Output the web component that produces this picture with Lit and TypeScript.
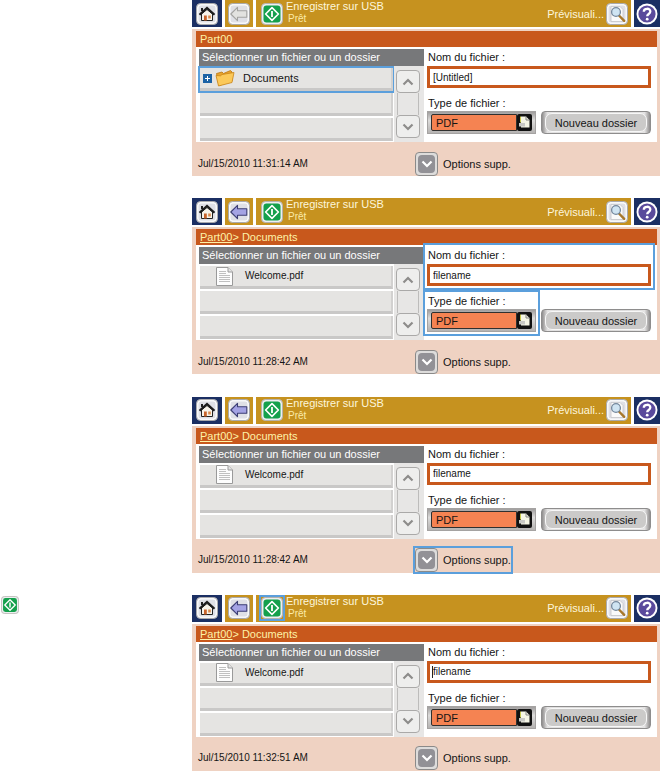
import { LitElement, html, css, svg, nothing } from "lit";
import { customElement, property } from "lit/decorators.js";
import { classMap } from "lit/directives/class-map.js";

type Mark = "" | "folder" | "fields" | "options" | "start";

const startIcon = html`<svg class="glyph" viewBox="0 0 22 22" aria-hidden="true">
  <rect x="0.5" y="0.5" width="21" height="21" rx="4" fill="#eceef0" stroke="#b4b2ae" />
  <rect x="2.5" y="2.5" width="17" height="17" rx="3" fill="#14a04c" />
  <path d="M11 4.6 L17.4 11 L11 17.4 L4.6 11 Z" fill="none" stroke="#fff" stroke-width="1.6" stroke-linejoin="round" />
  <path d="M11 8 V14" stroke="#fff" stroke-width="1.8" />
</svg>`;

const keyFace = svg`
  <rect x="0.5" y="0.5" width="21" height="21" rx="4" fill="#f4f5f7" stroke="#a9a9ac" />
  <rect x="2" y="2" width="18" height="18" rx="3" fill="#dfe0e6" stroke="#fbfbfb" />`;

const homeIcon = html`<svg class="glyph" viewBox="0 0 22 22" aria-hidden="true">
  ${keyFace}
  <path d="M5.5 11 V17.5 H16.5 V11 L11 6.5 Z" fill="#f7f3ea" stroke="#222" stroke-width="1" />
  <path d="M6 5 V8" stroke="#222" stroke-width="2" />
  <path d="M3.5 11.8 L11 5 L18.5 11.8" fill="none" stroke="#1c1c1c" stroke-width="2.2" />
  <path d="M8 17.5 V12.5 H10.8 V17.5 Z" fill="#c8642c" />
  <rect x="12.2" y="12.5" width="2.6" height="3" fill="#d98a4c" />
</svg>`;

const backIcon = (active: boolean) => html`<svg class="glyph" viewBox="0 0 22 22" aria-hidden="true">
  ${keyFace}
  <path
    d="M2.8 11 L9.5 4.3 V7.8 H18.8 V14.2 H9.5 V17.7 Z"
    fill=${active ? "#a4a3e4" : "#e2e2e0"}
    stroke=${active ? "#3c3e74" : "#a3a3a1"}
    stroke-width="1.1"
    stroke-linejoin="round"
  />
</svg>`;

const previewIcon = html`<svg class="glyph" viewBox="0 0 22 22" aria-hidden="true">
  ${keyFace}
  <path d="M5 3.5 H14 L17 6.5 V18.5 H5 Z" fill="#fafafa" stroke="#c4c4c8" stroke-width="0.8" />
  <path d="M13 12.5 L18.2 17.8" stroke="#a8782c" stroke-width="2.4" stroke-linecap="round" />
  <circle cx="10" cy="9" r="4.4" fill="#cfe4f2" stroke="#74879c" stroke-width="1.3" />
</svg>`;

const helpIcon = html`<svg class="glyph" viewBox="0 0 22 22" aria-hidden="true">
  <circle cx="11" cy="11" r="10.5" fill="#fff" />
  <circle cx="11" cy="11" r="8.6" fill="#5a4a9c" />
  <path d="M7.8 8.8 C7.8 4.8 14.3 4.8 14.3 8.6 C14.3 11 11.2 11 11.2 13.2" fill="none" stroke="#fff" stroke-width="2.3" />
  <circle cx="11.2" cy="16.2" r="1.4" fill="#fff" />
</svg>`;

const folderIcon = html`<svg class="folder" viewBox="0 0 20 18" aria-hidden="true">
  <path d="M1.5 4.5 L7 3 L8.5 4.5 L15.5 1.5 L17 3 V12 L4 16.5 Z" fill="#e8a42c" stroke="#b97410" stroke-width="0.8" />
  <path d="M3.5 17 L1 6.5 L5.5 6.8 L7 5.5 L19 3.5 L17 13.5 Z" fill="#fbc95a" stroke="#c98417" stroke-width="0.8" />
</svg>`;

const pageIcon = html`<svg class="page" viewBox="0 0 17 19" aria-hidden="true">
  <path d="M0.5 0.5 H12 L16.5 5 V18.5 H0.5 Z" fill="#fdfdfd" stroke="#9a9a9a" />
  <path d="M12 0.5 V5 H16.5" fill="#e4e4e4" stroke="#9a9a9a" />
  <path d="M3 4.5 H10 M3 6.5 H10 M3 8.5 H14 M3 10.5 H14 M3 12.5 H14 M3 14.5 H14" stroke="#b9b9b9" stroke-width="0.9" />
</svg>`;

const chevron = (up: boolean) => html`<svg class="chevron" viewBox="0 0 12 12" aria-hidden="true">
  <path d=${up ? "M1.5 8.5 L6 4 L10.5 8.5" : "M1.5 3.5 L6 8 L10.5 3.5"} fill="none" stroke="currentColor" stroke-width="2.2" />
</svg>`;

@customElement("usb-panel")
export class UsbPanel extends LitElement {
  @property() folder = "";
  @property() filename = "";
  @property() time = "";
  @property() mark: Mark = "";
  @property({ type: Boolean }) caret = false;

  static styles = css`
    :host {
      display: block;
      font: 11px/16px "Liberation Sans", Arial, sans-serif;
      color: #151515;
    }
    * {
      box-sizing: border-box;
    }
    button,
    input,
    select {
      font: inherit;
      color: inherit;
      margin: 0;
      padding: 0;
      border: 0;
      background: none;
    }
    svg {
      display: block;
      flex: none;
    }
    .glyph {
      width: 22px;
      height: 22px;
    }
    .mark {
      outline: 2px solid #5b9fdc;
    }
    .head {
      display: flex;
      gap: 3px;
      height: 27px;
    }
    .tile {
      display: flex;
      align-items: center;
      justify-content: center;
      width: 28px;
      background: #c6921f;
    }
    .tile.navy {
      width: 30px;
      background: #1b2f63;
    }
    .tile.help {
      width: 26px;
    }
    .bar {
      flex: 1;
      display: flex;
      align-items: center;
      gap: 3px;
      min-width: 0;
      padding: 0 3px 0 5px;
      background: #c6921f;
      color: #fdf6dc;
    }
    .titles {
      flex: 1;
      align-self: flex-start;
      min-width: 0;
      line-height: 12px;
      white-space: nowrap;
    }
    .title,
    .state {
      margin: 0;
      font-size: 11px;
      font-weight: 400;
    }
    .state {
      padding-left: 2px;
      font-size: 10px;
      line-height: 14px;
      color: #fbeaa6;
    }
    .preview {
      display: flex;
      align-items: center;
      gap: 2px;
    }
    .body {
      margin-top: 2px;
      padding: 2px 3px 0 4px;
      background: #efd2c2;
    }
    .crumbs {
      height: 16px;
      padding-left: 4px;
      background: #c8581c;
      color: #fdf2a8;
      line-height: 16px;
    }
    .crumbs a {
      color: inherit;
    }
    .main {
      display: grid;
      grid-template-columns: 228fr 233fr;
      height: 95px;
      padding-top: 2px;
      background: #fff;
    }
    .browser {
      display: flex;
      flex-direction: column;
      padding-left: 3px;
    }
    .caption {
      margin: 0;
      height: 17px;
      padding-left: 3px;
      font-size: 11px;
      font-weight: 400;
      line-height: 17px;
      color: #fff;
      background: #77787a;
      white-space: nowrap;
    }
    .picker {
      flex: 1;
      display: flex;
    }
    .rows {
      flex: 1;
      display: flex;
      flex-direction: column;
      gap: 2px;
      margin: 0;
      padding: 2px 1px 0;
      list-style: none;
    }
    .row {
      height: 23px;
      border-bottom: 3px solid #c9c8c7;
      border-right: 2px solid #d2d1d0;
      background: #e5e4e2;
    }
    .entry {
      display: flex;
      align-items: center;
      width: 100%;
      height: 20px;
    }
    .entry.dir {
      padding-left: 3px;
    }
    .entry.file {
      padding-left: 16px;
      gap: 12px;
      font-size: 10px;
    }
    .plus {
      width: 9px;
      height: 9px;
    }
    .folder {
      width: 20px;
      height: 18px;
      margin: 0 8px 0 3px;
    }
    .page {
      width: 17px;
      height: 19px;
    }
    .scroll {
      display: flex;
      flex-direction: column;
      width: 30px;
      padding: 4px 4px 4px 2px;
      background: #e7e6e5;
    }
    .track {
      flex: 1;
      margin: 0 1px;
      border: solid #bdbcbb;
      border-width: 0 1px;
    }
    .scroll button {
      display: flex;
      align-items: center;
      justify-content: center;
      height: 23px;
      border: 1px solid #aaa9a8;
      border-radius: 4px;
      background: #eeeeed;
      color: #8d8c8b;
    }
    .chevron {
      width: 12px;
      height: 12px;
    }
    .form {
      display: flex;
      flex-direction: column;
      gap: 8px;
      padding: 0 6px 0 3px;
    }
    .field {
      position: relative;
    }
    .field label {
      display: block;
      height: 17px;
      padding-left: 1px;
      line-height: 17px;
      white-space: nowrap;
    }
    .field.mark {
      outline-offset: 2px;
    }
    .name input {
      display: block;
      width: 100%;
      height: 22px;
      padding-left: 3px;
      border: 3px solid #c8581c;
      background: #fff;
      font-size: 10px;
      outline: 0;
    }
    .caret::after {
      content: "";
      position: absolute;
      left: 5px;
      top: 22px;
      width: 1px;
      height: 12px;
      background: #222;
    }
    .pair {
      display: flex;
      align-items: flex-end;
      gap: 5px;
    }
    .type {
      flex: 1;
    }
    .type label {
      height: 15px;
      line-height: 15px;
    }
    .choice {
      display: flex;
      align-items: center;
      height: 23px;
      padding: 3px;
      border: 1px solid #a5a3a2;
      background: linear-gradient(#a09e9e, #dcdbda 40%, #b5b3b2);
    }
    .choice select {
      flex: 1;
      min-width: 0;
      height: 17px;
      padding-left: 4px;
      border: 1px solid #30302f;
      border-radius: 2px 0 0 2px;
      background: #f58352;
      appearance: none;
    }
    .sheet {
      width: 15px;
      height: 17px;
    }
    .new {
      flex: 0 0 110px;
      height: 23px;
      padding: 1px;
      border: 1px solid #8e8d8d;
      border-radius: 4px;
      background: linear-gradient(90deg, #8f8d8d, #e4e3e3 5%, #d4d3d2 50%, #e4e3e3 95%, #8f8d8d);
      white-space: nowrap;
    }
    .new span {
      display: block;
      height: 19px;
      margin: 0 2px;
      border: 1px solid #f7f7f7;
      border-radius: 7px;
      background: #cbcac9;
      line-height: 18px;
    }
    .foot {
      display: grid;
      grid-template-columns: 216fr 245fr;
      align-items: center;
      height: 34px;
      padding-top: 9px;
    }
    .foot time {
      padding-left: 2px;
      font-size: 10px;
    }
    .options {
      display: flex;
      align-items: center;
      justify-self: start;
      gap: 5px;
      height: 24px;
      margin-left: 3px;
      white-space: nowrap;
    }
    .knob {
      display: flex;
      align-items: center;
      justify-content: center;
      width: 23px;
      height: 24px;
      padding: 2px;
      border: 1px solid #8b8a89;
      border-radius: 4px;
      background: #dddcdb;
      color: #fff;
    }
    .knob span {
      display: flex;
      align-items: center;
      justify-content: center;
      width: 17px;
      height: 18px;
      border-radius: 4px;
      background: #929196;
    }
  `;

  private entry() {
    if (this.folder) {
      return html`<button class="entry file">${pageIcon}<span>Welcome.pdf</span></button>`;
    }
    return html`<button class="entry dir">
      <svg class="plus" viewBox="0 0 9 9" aria-hidden="true">
        <rect width="9" height="9" fill="#1b62a5" />
        <path d="M2 4.5 H7 M4.5 2 V7" stroke="#fff" stroke-width="1" />
      </svg>
      ${folderIcon}<span>Documents</span>
    </button>`;
  }

  render() {
    const on = (m: Mark) => this.mark === m;
    return html`
      <header class="head">
        <button class="tile navy" aria-label="Accueil">${homeIcon}</button>
        <button class="tile" aria-label="Retour">${backIcon(!!this.folder)}</button>
        <div class="bar">
          <button class=${classMap({ mark: on("start") })} aria-label="Démarrer">${startIcon}</button>
          <div class="titles">
            <h2 class="title">Enregistrer sur USB</h2>
            <p class="state">Prêt</p>
          </div>
          <button class="preview"><span>Prévisuali...</span>${previewIcon}</button>
        </div>
        <button class="tile navy help" aria-label="Aide">${helpIcon}</button>
      </header>
      <section class="body">
        <nav class="crumbs">
          ${this.folder ? html`<a href="#root">Part00</a>&gt; ${this.folder}` : "Part00"}
        </nav>
        <div class="main">
          <div class="browser">
            <h3 class="caption">Sélectionner un fichier ou un dossier</h3>
            <div class="picker">
              <ul class="rows">
                <li class=${classMap({ row: true, mark: on("folder") })}>${this.entry()}</li>
                <li class="row"></li>
                <li class="row"></li>
              </ul>
              <div class="scroll">
                <button aria-label="Monter">${chevron(true)}</button>
                <div class="track"></div>
                <button aria-label="Descendre">${chevron(false)}</button>
              </div>
            </div>
          </div>
          <form class="form" @submit=${(e: Event) => e.preventDefault()}>
            <div class=${classMap({ field: true, name: true, mark: on("fields"), caret: this.caret })}>
              <label for="name">Nom du fichier :</label>
              <input id="name" type="text" .value=${this.filename} />
            </div>
            <div class="pair">
              <div class=${classMap({ field: true, type: true, mark: on("fields") })}>
                <label for="type">Type de fichier :</label>
                <div class="choice">
                  <select id="type">
                    <option>PDF</option>
                  </select>
                  <svg class="sheet" viewBox="0 0 15 17" aria-hidden="true">
                    <rect width="15" height="17" rx="2" fill="#111" />
                    <path d="M4 2.5 H9 L12.5 6 V13.5 H4 Z" fill="#f6f6e6" />
                    <path d="M9 2.5 V6 H12.5" fill="none" stroke="#777" stroke-width="0.9" />
                    <path d="M2 9 H8 V12.5 H2 Z" fill="#c9c9c5" />
                    <path d="M3.5 2.5 V8.5" stroke="#c8c94a" />
                  </svg>
                </div>
              </div>
              <button class="new" type="button"><span>Nouveau dossier</span></button>
            </div>
          </form>
        </div>
        <footer class="foot">
          <time>${this.time}</time>
          <button class=${classMap({ options: true, mark: on("options") })}>
            <span class="knob"><span>${chevron(false)}</span></span>Options supp.
          </button>
        </footer>
      </section>
    `;
  }
}

interface Step {
  folder: string;
  filename: string;
  time: string;
  mark: Mark;
}

const steps: Step[] = [
  { folder: "", filename: "[Untitled]", time: "Jul/15/2010 11:31:14 AM", mark: "folder" },
  { folder: "Documents", filename: "filename", time: "Jul/15/2010 11:28:42 AM", mark: "fields" },
  { folder: "Documents", filename: "filename", time: "Jul/15/2010 11:28:42 AM", mark: "options" },
  { folder: "Documents", filename: "filename", time: "Jul/15/2010 11:32:51 AM", mark: "start" },
];

@customElement("app-root")
export class AppRoot extends LitElement {
  static styles = css`
    :host {
      display: block;
      background: #fff;
    }
    .steps {
      display: flex;
      flex-direction: column;
      justify-content: space-between;
      gap: 22px;
      box-sizing: border-box;
      min-height: 100vh;
      margin: 0;
      padding: 0;
      list-style: none;
    }
    .step {
      display: grid;
      grid-template-columns: 192px minmax(0, 1fr);
      padding-right: 1px;
    }
    .note {
      padding: 1px;
    }
    .note .glyph {
      display: block;
      width: 18px;
      height: 18px;
    }
  `;

  render() {
    return html`<ol class="steps">
      ${steps.map(
        (s) => html`<li class="step">
          <div class="note">${s.mark === "start" ? startIcon : nothing}</div>
          <usb-panel
            .folder=${s.folder}
            .filename=${s.filename}
            .time=${s.time}
            .mark=${s.mark}
            .caret=${s.mark === "start"}
          ></usb-panel>
        </li>`
      )}
    </ol>`;
  }
}
